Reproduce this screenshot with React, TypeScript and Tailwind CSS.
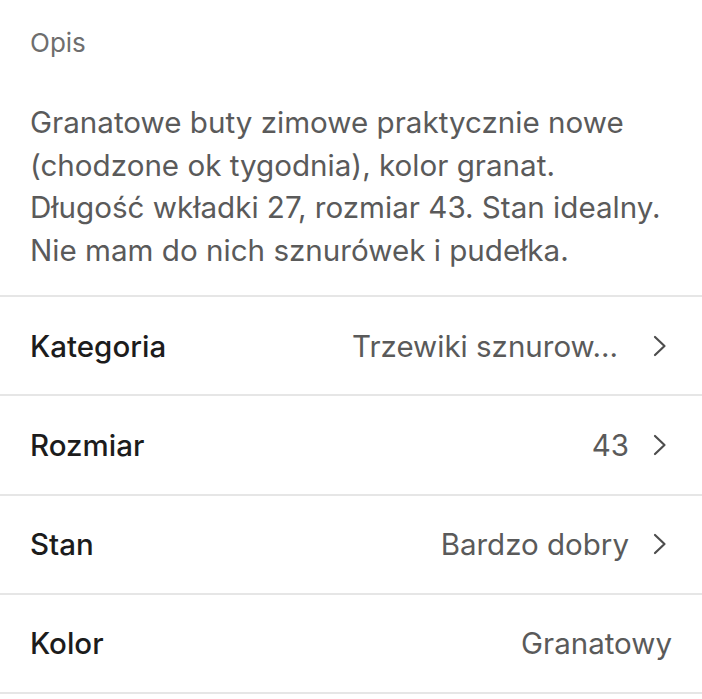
const rows = [
  { label: "Kategoria", value: "Trzewiki sznurow...", chevron: true, extra: true },
  { label: "Rozmiar", value: "43", chevron: true, extra: false },
  { label: "Stan", value: "Bardzo dobry", chevron: true, extra: false },
  { label: "Kolor", value: "Granatowy", chevron: false, extra: false },
];

const lines = [
  "Granatowe buty zimowe praktycznie nowe",
  "(chodzone ok tygodnia), kolor granat.",
  "Długość wkładki 27, rozmiar 43. Stan idealny.",
  "Nie mam do nich sznurówek i pudełka.",
];

const Chevron = () => (
  <svg width="16" height="24" viewBox="0 0 16 24" fill="none" className="shrink-0 mr-[4px]">
    <path d="M3 3L12.5 12L3 21" stroke="#4d4d4d" strokeWidth="2.2" strokeLinecap="round" strokeLinejoin="round" />
  </svg>
);

export default function App() {
  return (
    <div className="w-[702px] h-[699px] bg-white overflow-hidden" style={{ fontFamily: "Inter, 'Noto Sans', sans-serif" }}>
      <div className="px-[30px] pt-[27px] pb-[24px] border-b-2 border-[#e6e6e6]">
        <p className="text-[26px] leading-[32px] text-[#6e6e6e]">Opis</p>
        <p className="mt-[42px] text-[29.6px] leading-[42.5px] text-[#5a5a5a]">
          {lines.map((l) => (
            <span key={l} className="block whitespace-nowrap">{l}</span>
          ))}
        </p>
      </div>
      {rows.map((r) => (
        <div key={r.label} className="h-[99.25px] px-[30px] flex items-center justify-between border-b-2 border-[#e6e6e6]">
          <span className="text-[29.5px] font-medium text-[#1c1c1c]">{r.label}</span>
          <div className="flex items-center gap-[23px]">
            <span className={r.extra ? "text-[29.5px] text-[#5a5a5a] pr-[11px]" : "text-[29.5px] text-[#5a5a5a]"}>{r.value}</span>
            {r.chevron && <Chevron />}
          </div>
        </div>
      ))}
    </div>
  );
}
